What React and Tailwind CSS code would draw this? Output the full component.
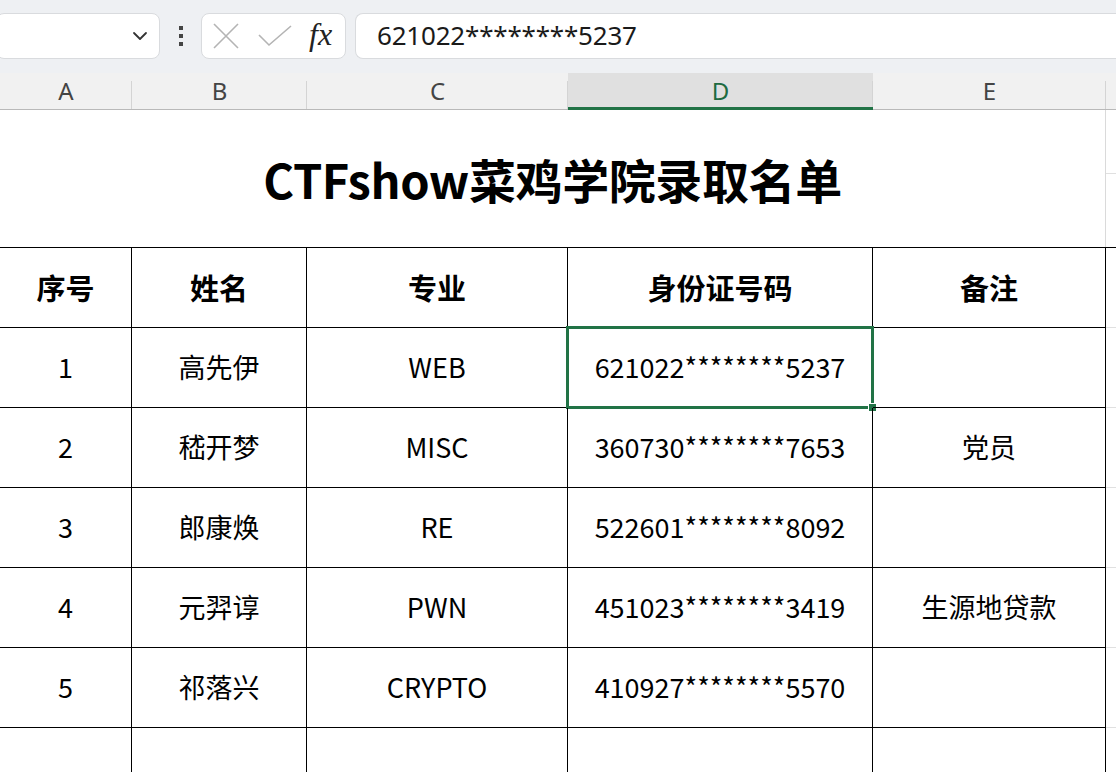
import React from 'react';
import { ChevronDown } from 'lucide-react';

const FONT = { fontFamily: '"Noto Sans CJK SC", "Noto Sans", sans-serif' };

const COLS = [
    { key: 'A', w: 'w-[132px]' },
    { key: 'B', w: 'w-[175px]' },
    { key: 'C', w: 'w-[261px]' },
    { key: 'D', w: 'w-[305px]' },
    { key: 'E', w: 'w-[233px]' },
];

const HEAD = ['序号', '姓名', '专业', '身份证号码', '备注'];

const ROWS = [
    ['1', '高先伊', 'WEB', '621022********5237', ''],
    ['2', '嵇开梦', 'MISC', '360730********7653', '党员'],
    ['3', '郎康焕', 'RE', '522601********8092', ''],
    ['4', '元羿谆', 'PWN', '451023********3419', '生源地贷款'],
    ['5', '祁落兴', 'CRYPTO', '410927********5570', ''],
    ['', '', '', '', ''],
];

function Toolbar() {
    return (
        <div className="h-[73px] bg-[#eef0f3] flex items-center pb-[2px]">
            {/* name box */}
            <div className="w-[164px] -ml-[4px] h-[46px] bg-white border border-[#d9dbde] rounded-[8px] flex items-center justify-end pr-[7px]">
                <ChevronDown size={24} strokeWidth={1.8} className="text-[#333]" />
            </div>
            {/* drag dots */}
            <div className="flex flex-col gap-[4px] w-[41px] items-center">
                <span className="w-[4px] h-[4px] bg-[#444]" />
                <span className="w-[4px] h-[4px] bg-[#444]" />
                <span className="w-[4px] h-[4px] bg-[#444]" />
            </div>
            {/* cancel / enter / fx */}
            <div className="w-[145px] h-[46px] bg-white border border-[#d9dbde] rounded-[8px] flex items-center pl-[11px]">
                <svg width="26" height="26" viewBox="0 0 26 26" className="text-[#b4b4b4]">
                    <path d="M1 1 L25 25 M25 1 L1 25" stroke="currentColor" strokeWidth="1.6" fill="none" />
                </svg>
                <svg width="34" height="22" viewBox="0 0 34 22" className="text-[#b4b4b4] ml-[19px]">
                    <path d="M1 10 L11 20 L33 1" stroke="currentColor" strokeWidth="1.6" fill="none" />
                </svg>
                <span
                    className="italic text-[32px] text-[#222] leading-none ml-[17px] -mt-[4px]"
                    style={{ fontFamily: '"Liberation Serif", serif' }}
                >
                    fx
                </span>
            </div>
            {/* formula input */}
            <div className="flex-1 ml-[9px] h-[46px] bg-white border border-[#d9dbde] rounded-l-[8px] border-r-0 flex items-center pl-[21px]">
                <span className="text-[26px] text-[#1a1a1a] tracking-[-0.2px]" style={{ fontFamily: '"Noto Sans", sans-serif' }}>
                    621022********5237
                </span>
            </div>
        </div>
    );
}

function ColumnHeader() {
    return (
        <div className="flex h-[37px] bg-[#f1f1f1] border-b border-[#b9b9b9]">
            {COLS.map(c => {
                const active = c.key === 'D';
                return (
                    <div
                        key={c.key}
                        className={`${c.w} relative flex items-center justify-center text-[24px] ${
                            active
                                ? 'bg-[#e0e0e0] text-[#1e6b41] border-b-[3px] border-[#217346] -mb-[1px] pt-[2px]'
                                : 'text-[#444]'
                        }`}
                        style={{ fontFamily: '"Noto Sans", sans-serif' }}
                    >
                        {c.key}
                        <span className="absolute right-0 top-[8px] bottom-0 w-px bg-[#d4d4d4]" />
                    </div>
                );
            })}
            <div className="flex-1" />
        </div>
    );
}

function Sheet() {
    return (
        <div className="flex-1 bg-white overflow-hidden" style={FONT}>
            {/* merged title rows */}
            <div className="flex h-[137px]">
                <div className="w-[1106px] border-r border-[#dadada] flex items-center justify-center pt-[2px]">
                    <h1 className="text-[47px] font-bold text-black tracking-[-0.4px]">CTFshow菜鸡学院录取名单</h1>
                </div>
                <div className="flex-1 flex flex-col">
                    <div className="h-[64px] border-b border-[#e0e0e0]" />
                    <div className="flex-1" />
                </div>
            </div>

            {/* table header */}
            <div className="flex h-[81px] border-t border-black">
                {COLS.map((c, i) => (
                    <div
                        key={c.key}
                        className={`${c.w} border-r border-b border-black flex items-center justify-center text-[29px] font-bold text-black`}
                    >
                        {HEAD[i]}
                    </div>
                ))}
                <div className="flex-1 border-b border-[#e0e0e0]" />
            </div>

            {/* body rows */}
            {ROWS.map((r, ri) => (
                <div key={ri} className="flex h-[80px]">
                    {COLS.map((c, i) => {
                        const selected = ri === 0 && i === 3;
                        return (
                            <div
                                key={c.key}
                                className={`${c.w} relative border-r border-b border-black flex items-center justify-center text-[27px] text-black`}
                            >
                                {r[i]}
                                {selected && (
                                    <>
                                        <span className="absolute -left-[2px] -top-[2px] -right-[2px] -bottom-[2px] border-[3px] border-[#217346]" />
                                        <span className="absolute -right-[5px] -bottom-[5px] w-[9px] h-[9px] bg-[#217346] border border-white" />
                                    </>
                                )}
                            </div>
                        );
                    })}
                    <div className="flex-1 border-b border-[#e0e0e0]" />
                </div>
            ))}
        </div>
    );
}

export default function App() {
    return (
        <div className="w-[1116px] h-[772px] flex flex-col overflow-hidden bg-white" style={FONT}>
            <Toolbar />
            <ColumnHeader />
            <Sheet />
        </div>
    );
}
